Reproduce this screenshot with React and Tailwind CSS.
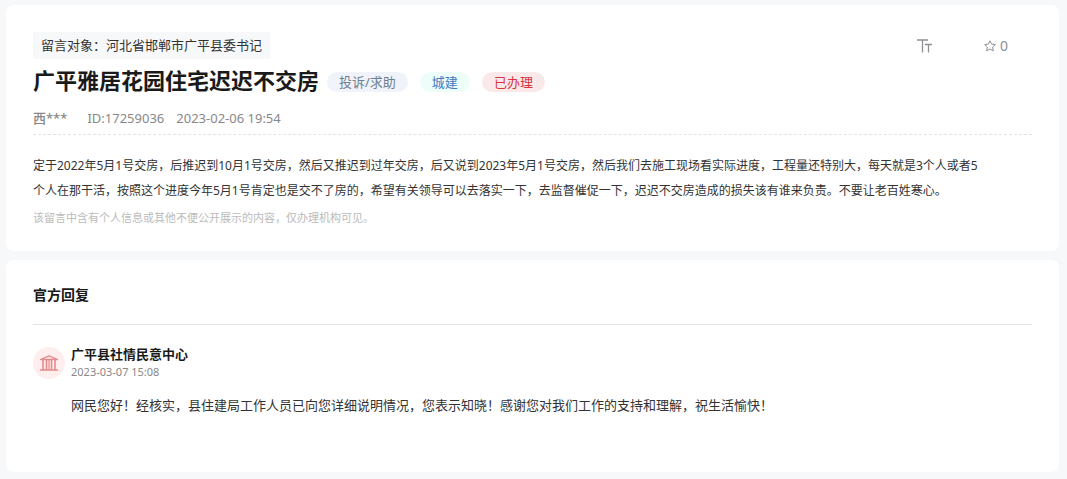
const message = {
  target: "河北省邯郸市广平县委书记",
  title: "广平雅居花园住宅迟迟不交房",
  author: "西***",
  id: "17259036",
  createdAt: "2023-02-06 19:54",
  stars: 0,
  content:
    "定于2022年5月1号交房，后推迟到10月1号交房，然后又推迟到过年交房，后又说到2023年5月1号交房，然后我们去施工现场看实际进度，工程量还特别大，每天就是3个人或者5个人在那干活，按照这个进度今年5月1号肯定也是交不了房的，希望有关领导可以去落实一下，去监督催促一下，迟迟不交房造成的损失该有谁来负责。不要让老百姓寒心。",
  notice: "该留言中含有个人信息或其他不便公开展示的内容，仅办理机构可见。",
};

const tags = [
  { label: "投诉/求助", className: "bg-[#f0f3f9] text-[#6f7f92]" },
  { label: "城建", className: "bg-[#edfdfa] text-[#3f7cc4]" },
  { label: "已办理", className: "bg-[#fbe9ea] text-[#d8343c]" },
];

const replies = [
  {
    id: 1,
    name: "广平县社情民意中心",
    time: "2023-03-07 15:08",
    text: "网民您好！经核实，县住建局工作人员已向您详细说明情况，您表示知晓！感谢您对我们工作的支持和理解，祝生活愉快！",
  },
];

export default function App() {
  return (
    <div className="flex min-h-screen flex-col gap-[9px] bg-[#f7f8fa] pt-[5px] pr-2 pb-[7px] pl-[6px] font-['Noto_Sans','Noto_Sans_CJK_SC',sans-serif] text-[13px] text-[#333]">
      <MessageCard />
      <ReplyCard />
    </div>
  );
}

function MessageCard() {
  return (
    <article className="rounded-lg bg-white px-[27px] pt-[27px] pb-[23px]">
      <div className="flex items-center justify-between">
        <p className="rounded-xs bg-[#f6f8fa] px-2 leading-[27px]">
          留言对象：{message.target}
        </p>
        <div className="mr-6 flex items-center gap-[52px] text-[#8c9096]">
          <button type="button" aria-label="字号" className="cursor-pointer">
            <FontSizeIcon />
          </button>
          <button
            type="button"
            aria-label="收藏"
            className="flex cursor-pointer items-center gap-1 text-sm leading-5"
          >
            <StarIcon />
            {message.stars}
          </button>
        </div>
      </div>

      <div className="mt-[7px] flex items-center gap-2">
        <h1 className="pb-1 text-[22px] leading-7 font-bold text-[#1a1a1a]">
          {message.title}
        </h1>
        <ul className="flex gap-3">
          {tags.map((tag) => (
            <li
              key={tag.label}
              className={`rounded-full px-3 leading-5 ${tag.className}`}
            >
              {tag.label}
            </li>
          ))}
        </ul>
      </div>

      <div className="mt-[10px] flex border-b border-dashed border-[#e3e3e3] pb-[6px] leading-5 text-[#888]">
        <span className="mr-5 font-medium">{message.author}</span>
        <span className="mr-3">ID:{message.id}</span>
        <time>{message.createdAt}</time>
      </div>

      <p className="pt-[18px] pr-12 text-xs leading-[25px]">
        {message.content}
      </p>
      <p className="mt-[5px] text-[11px] leading-5 text-[#bbb]">
        {message.notice}
      </p>
    </article>
  );
}

function ReplyCard() {
  return (
    <section className="grow rounded-lg bg-white px-[27px] pt-[25px] pb-[54px]">
      <h2 className="border-b border-[#e3e3e3] pb-[19px] text-sm leading-5 font-bold text-[#1a1a1a]">
        官方回复
      </h2>
      {replies.map((reply) => (
        <div key={reply.id} className="mt-5">
          <div className="flex items-center gap-[6px]">
            <div className="flex size-8 items-center justify-center rounded-full bg-[#ffeeee] text-[#e58a8a]">
              <InstitutionIcon />
            </div>
            <div className="leading-[18px]">
              <h3 className="font-bold text-[#1a1a1a]">{reply.name}</h3>
              <time className="block text-[11px] text-[#888]">
                {reply.time}
              </time>
            </div>
          </div>
          <p className="mt-3 pl-[38px] leading-[25px]">{reply.text}</p>
        </div>
      ))}
    </section>
  );
}

function FontSizeIcon() {
  return (
    <svg width="15" height="14" viewBox="0 0 15 14" fill="none" stroke="currentColor">
      <path d="M0 1H11M5.5 1V13.5M8 5.5H15M11.5 5.5V13.5" strokeWidth="1.3" />
    </svg>
  );
}

function StarIcon() {
  return (
    <svg
      width="12"
      height="12"
      viewBox="0 0 12 12"
      fill="none"
      stroke="currentColor"
      strokeLinejoin="round"
    >
      <path d="M6 .8 7.6 4.1 11.3 4.6 8.6 7.1 9.3 10.8 6 9 2.7 10.8 3.4 7.1 .7 4.6 4.4 4.1Z" />
    </svg>
  );
}

function InstitutionIcon() {
  return (
    <svg width="18" height="16" viewBox="0 0 18 16" fill="none" stroke="currentColor">
      <path d="M.5 4.5 9 .8 17.5 4.5ZM0 15H18" strokeWidth="1.3" strokeLinejoin="round" />
      <path d="M3 5V15M6.5 5V15M11.5 5V15M15 5V15" strokeWidth="1.6" />
      <path d="M9 5V15" strokeWidth="1.2" />
    </svg>
  );
}
